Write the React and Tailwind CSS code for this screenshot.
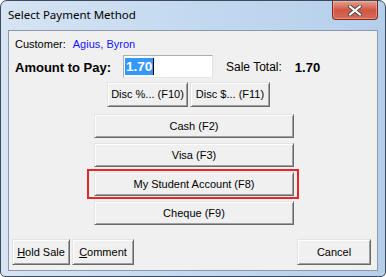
import React from 'react';

const ui = { fontFamily: '"Liberation Sans", Arial, sans-serif' };

function WinButton({ className = '', children }) {
  return (
    <div
      className={
        'flex items-center justify-center bg-[#f0f0f0] border border-t-[#e3e3e3] border-l-[#e3e3e3] border-r-[#696969] border-b-[#696969] shadow-[inset_1px_1px_0_#ffffff,inset_-1px_-1px_0_#a0a0a0] text-[11px] text-black leading-none ' +
        className
      }
    >
      {children}
    </div>
  );
}

function CloseButton() {
  return (
    <div className="mr-[7px] w-[46px] h-[19px] rounded-b-[4px] border border-t-0 border-[#7a2a1e] bg-gradient-to-b from-[#e4a18f] via-[#cf5645] to-[#d66a55] shadow-[inset_0_0_0_1px_rgba(255,200,190,0.45)] flex items-center justify-center">
      <svg width="14" height="11" viewBox="0 0 14 11">
        <path d="M2 1.5 L12 9.5 M12 1.5 L2 9.5" stroke="#4a4a4a" strokeWidth="4" strokeLinecap="square" />
        <path d="M2 1.5 L12 9.5 M12 1.5 L2 9.5" stroke="#ffffff" strokeWidth="2" strokeLinecap="square" />
      </svg>
    </div>
  );
}

export default function App() {
  return (
    <div className="w-[386px] h-[277px] bg-white" style={ui}>
      <div className="w-[386px] h-[277px] flex flex-col rounded-t-[7px] rounded-b-[5px] border border-[#3d4b5c] bg-gradient-to-r from-[#d6e4f4] via-[#c3d9f0] to-[#b5cfeb] overflow-hidden">
        {/* title bar */}
        <div className="h-[29px] flex items-start justify-between">
          <div
            className="pl-[7px] pt-[7px] text-[11.5px] leading-[14px] text-black"
            style={{ fontFamily: '"Noto Sans", "Open Sans", sans-serif' }}
          >
            Select Payment Method
          </div>
          <CloseButton />
        </div>

        {/* client area */}
        <div className="mx-[7px] h-[241px] border border-[#8c99a8] bg-[#f0f0f0] flex flex-col">
          <div className="pt-[7px] pl-[6px] flex text-[11px] leading-[13px]">
            <span className="text-black">Customer:</span>
            <span className="ml-[7px] text-[#1414ff]">Agius, Byron</span>
          </div>

          <div className="mt-[4px] pl-[6px] flex items-start h-[23px]">
            <div className="w-[108px] pt-[5px] text-[13px] leading-[15px] font-bold text-black">
              Amount to Pay:
            </div>
            <div className="w-[90px] h-[23px] bg-white border border-[#abadb3] border-b-[#e3e9ef] border-r-[#dbdfe6] pl-[1px] pt-[2px] flex items-start">
              <span className="bg-[#3399ff] text-white font-bold text-[13.5px] leading-[17px] px-[1px]">1.70</span>
              <span className="w-[1px] h-[17px] bg-black" />
            </div>
            <div className="ml-[13px] pt-[5px] text-[12px] leading-[15px] text-black">Sale Total:</div>
            <div className="ml-[13px] pt-[5px] text-[13px] leading-[15px] font-bold text-black">1.70</div>
          </div>

          <div className="mt-[4px] ml-[98px] flex gap-[2px]">
            <WinButton className="w-[81px] h-[25px]">Disc %... (F10)</WinButton>
            <WinButton className="w-[80px] h-[25px]">Disc $... (F11)</WinButton>
          </div>

          <div className="mt-[7px] ml-[85px] w-[200px] flex flex-col gap-[5px]">
            <WinButton className="h-[24px]">Cash (F2)</WinButton>
            <WinButton className="h-[24px]">Visa (F3)</WinButton>
            <div className="relative">
              <WinButton className="h-[24px]">My Student Account (F8)</WinButton>
              <div className="absolute -left-[7px] -right-[5px] -top-[3px] -bottom-[3px] border-2 border-[#e8262a]" />
            </div>
            <WinButton className="h-[24px]">Cheque (F9)</WinButton>
          </div>

          <div className="mt-auto pb-[5px] flex items-center">
            <WinButton className="ml-[3px] w-[58px] h-[26px]">
              <u>H</u>old Sale
            </WinButton>
            <WinButton className="ml-[2px] w-[62px] h-[26px]">
              <u>C</u>omment
            </WinButton>
            <WinButton className="ml-auto mr-[6px] w-[74px] h-[26px]">Cancel</WinButton>
          </div>
        </div>
      </div>
    </div>
  );
}
